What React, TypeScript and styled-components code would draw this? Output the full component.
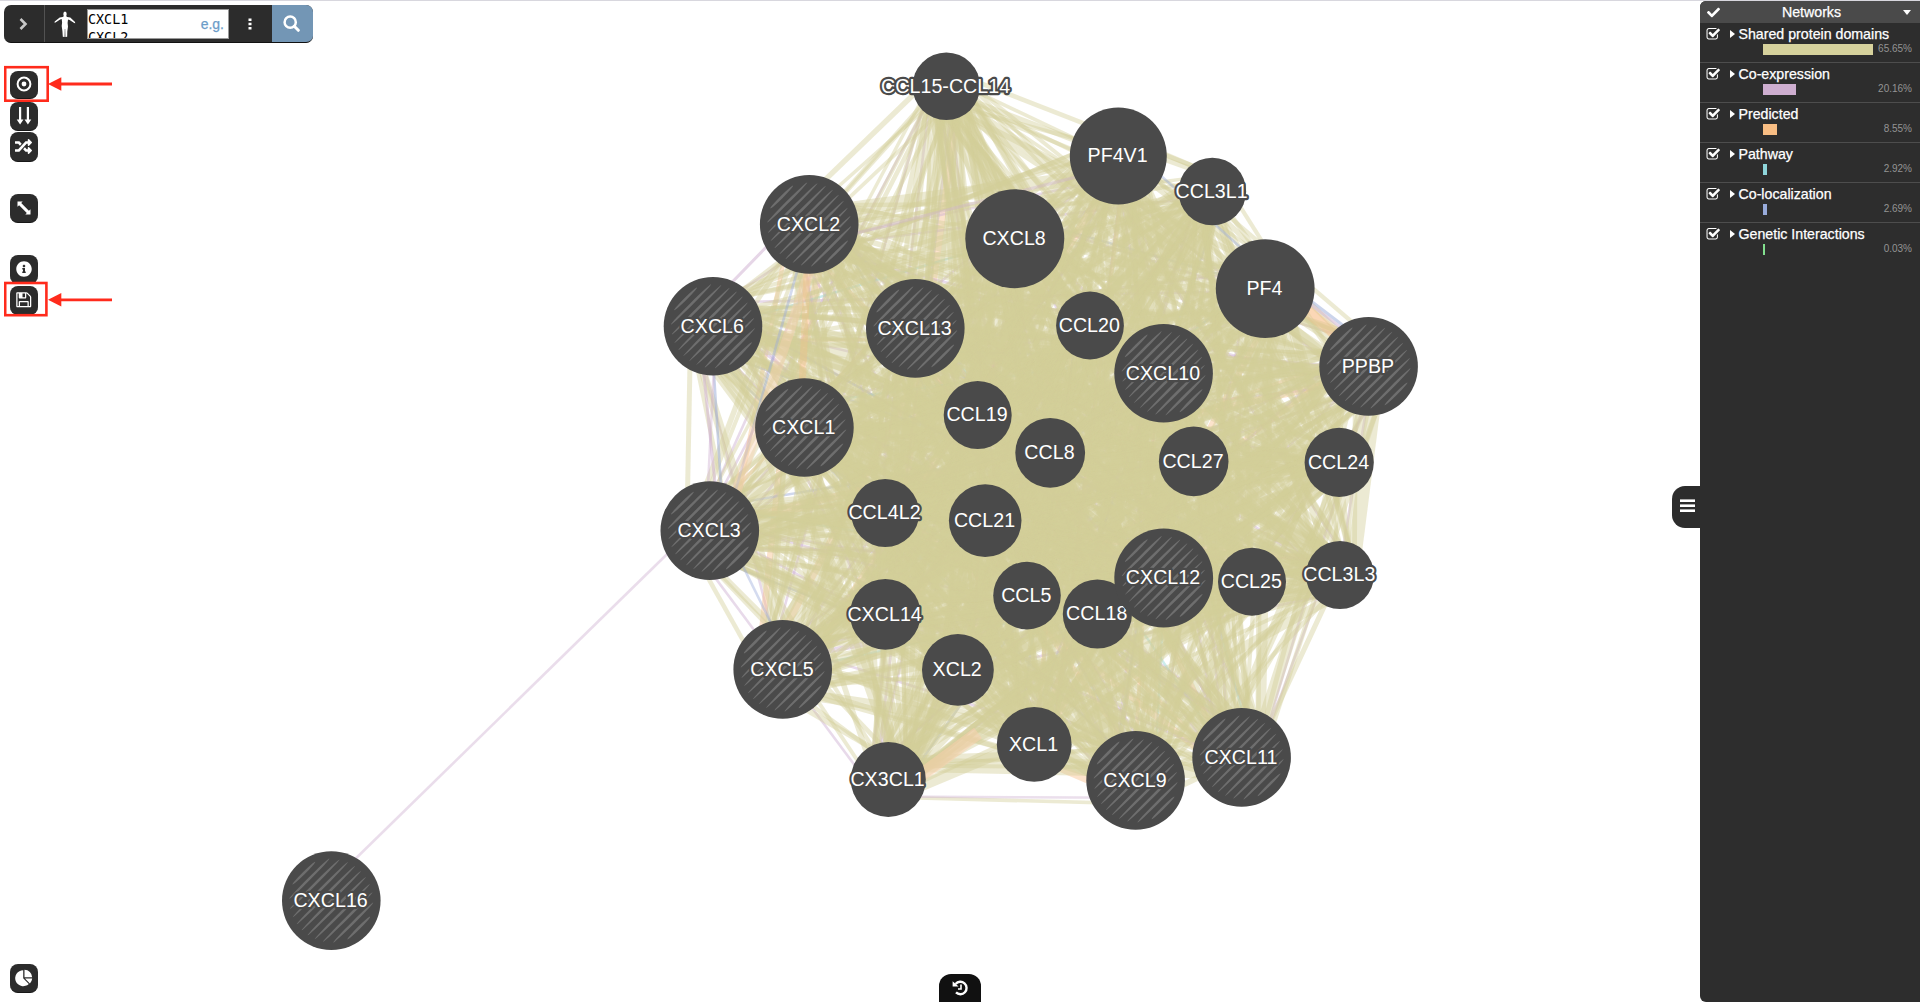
import React from "react";
import styled, { createGlobalStyle } from "styled-components";
import { FaCheck, FaInfoCircle, FaRandom } from "react-icons/fa";

const DARK = "#2c2c2c";
const NODE = "#4a4a4a";
const RED = "#ff2b1c";
const SANS = '"Liberation Sans", Arial, Helvetica, sans-serif';

const GlobalStyle = createGlobalStyle`
  html, body { margin: 0; padding: 0; }
  body { background: #fff; font-family: ${SANS}; overflow: hidden; }
  * { box-sizing: border-box; }
`;

const Page = styled.div`
  display: flex;
  width: 100%;
  height: 1002px;
  border-top: 1px solid #d8d7de;
`;

const Workspace = styled.main`
  position: relative;
  flex: 1;
  display: flex;
  flex-direction: column;
  align-items: flex-start;
  padding: 4px 0 0 4px;
`;

const Canvas = styled.svg`
  position: absolute;
  left: 0;
  top: -1px;
  width: 1700px;
  height: 1002px;
`;

const NodeLabel = styled.text`
  font-family: ${SANS};
  font-size: 19.6px;
  letter-spacing: 0.05px;
  fill: #fff;
  stroke: ${NODE};
  stroke-width: 4.4px;
  stroke-linejoin: round;
  paint-order: stroke;
  text-anchor: middle;
`;

const SearchBar = styled.div`
  position: relative;
  display: flex;
  width: 309px;
  height: 38px;
  border-radius: 7px;
  overflow: hidden;
  background: ${DARK};
  border-bottom: 1px solid #111;
`;

const BarCell = styled.div<{ $width: number; $fill?: string; $divider?: boolean }>`
  display: flex;
  align-items: center;
  justify-content: center;
  width: ${(p) => p.$width}px;
  padding-right: 2px;
  background: ${(p) => p.$fill ?? "transparent"};
  border-right: ${(p) => (p.$divider ? "1px solid #525252" : "none")};
`;

const GeneBox = styled.div`
  display: flex;
  justify-content: space-between;
  width: 142px;
  height: 30px;
  margin-top: 4px;
  padding: 0 4px 0 0;
  overflow: hidden;
  background: #fff;
  border: 1px solid #999;
`;

const GeneList = styled.div`
  padding-top: 1px;
  font: 13.4px/17.5px "DejaVu Sans Mono", monospace;
  color: #000;
  white-space: pre;
`;

const Example = styled.span`
  font-size: 14px;
  line-height: 29px;
  color: #6c9cc8;
  -webkit-text-stroke: 0.25px #6c9cc8;
`;

const Tools = styled.nav`
  display: flex;
  flex-direction: column;
  margin: 28px 0 0 6px;
`;

const ToolButton = styled.div<{ $gap?: number; $height?: number }>`
  position: relative;
  display: flex;
  align-items: center;
  justify-content: center;
  width: 28px;
  height: ${(p) => p.$height ?? 29}px;
  margin-top: ${(p) => p.$gap ?? 0}px;
  padding: 0 1px 1px 0;
  border-radius: 8px;
  background: ${DARK};
  border-bottom: 1px solid #171717;
  color: #fff;
`;

const Callout = styled.svg`
  position: absolute;
  left: -6px;
  width: 110px;
  height: 38px;
  top: -6px;
  z-index: 2;
`;

const PieTool = styled(ToolButton)`
  margin: auto 0 9px 6px;
`;

const HistoryTab = styled.div`
  position: absolute;
  left: 939px;
  bottom: 0;
  display: flex;
  align-items: center;
  justify-content: center;
  width: 42px;
  height: 28px;
  border-radius: 12px 12px 0 0;
  background: #111;
  color: #fff;
`;

const MenuTab = styled.div`
  position: absolute;
  right: 0;
  top: 485px;
  display: flex;
  flex-direction: column;
  justify-content: center;
  gap: 2px;
  width: 28px;
  height: 42px;
  padding: 0 5px 3px 8px;
  border-radius: 13px 0 0 13px;
  background: ${DARK};
`;

const MenuLine = styled.i`
  height: 3px;
  background: #fff;
  border-top: 1px solid #aaa;
`;

const Panel = styled.aside`
  width: 220px;
  border-radius: 6px 0 0 6px;
  overflow: hidden;
  background: #2d2d2d;
  color: #fff;
`;

const PanelHeader = styled.header`
  display: flex;
  align-items: center;
  justify-content: space-between;
  height: 22px;
  padding: 0 9px 0 7px;
  background: #4a4a4a;
  font-size: 14.2px;
  -webkit-text-stroke: 0.25px #fff;
`;

const Caret = styled.i`
  border: 4.5px solid transparent;
  border-top: 5px solid #fff;
  border-bottom: 0;
`;

const NetworkRow = styled.section`
  height: 40px;
  padding: 3px 8px 0 6px;
  border-bottom: 1px solid #4d4d4d;
  &:last-child { border-bottom: 0; }
`;

const RowTitle = styled.div`
  display: flex;
  align-items: center;
  height: 16px;
  font-size: 14.2px;
  white-space: nowrap;
  -webkit-text-stroke: 0.25px #fff;
`;

const Expander = styled.i`
  margin: 0 4px 0 9px;
  border: 4.5px solid transparent;
  border-left: 5px solid #fff;
  border-right: 0;
`;

const WeightLine = styled.div`
  display: flex;
  justify-content: space-between;
  height: 16px;
  padding-left: 57px;
  font-size: 10px;
  line-height: 14px;
  color: #949494;
`;

const WeightBar = styled.div<{ $width: number; $color: string }>`
  width: ${(p) => p.$width}px;
  height: 11px;
  margin-top: 2px;
  background: ${(p) => p.$color};
`;

type GeneNode = { name: string; x: number; y: number; r: number; query?: boolean };

const nodes: GeneNode[] = [
  { name: "CCL15-CCL14", x: 946.3, y: 86.3, r: 33.8 },
  { name: "CXCL2", x: 809.2, y: 224.4, r: 49.3, query: true },
  { name: "CXCL6", x: 713, y: 326.3, r: 49.3, query: true },
  { name: "CXCL13", x: 915.3, y: 328.4, r: 49.3, query: true },
  { name: "CXCL8", x: 1014.8, y: 238.7, r: 49.5 },
  { name: "CXCL1", x: 804.4, y: 427.5, r: 49.3, query: true },
  { name: "CCL19", x: 977.7, y: 415, r: 34 },
  { name: "PF4V1", x: 1118.3, y: 156, r: 48.5 },
  { name: "CCL3L1", x: 1212.3, y: 191.5, r: 33.8 },
  { name: "PF4", x: 1265.2, y: 288.6, r: 49.4 },
  { name: "CCL20", x: 1090, y: 325.5, r: 33.9 },
  { name: "CXCL10", x: 1163.6, y: 373.3, r: 49.3, query: true },
  { name: "PPBP", x: 1368.6, y: 366.4, r: 49.3, query: true },
  { name: "CCL8", x: 1050.2, y: 452.8, r: 34.9 },
  { name: "CCL27", x: 1193.7, y: 461.4, r: 34.8 },
  { name: "CCL24", x: 1339.2, y: 462.4, r: 34.6 },
  { name: "CXCL3", x: 709.8, y: 530.6, r: 49.3, query: true },
  { name: "CCL4L2", x: 885.2, y: 513, r: 34 },
  { name: "CCL21", x: 985.2, y: 520.6, r: 36.3 },
  { name: "CCL5", x: 1027, y: 595.6, r: 33.8 },
  { name: "CXCL14", x: 885.3, y: 614.3, r: 35.4 },
  { name: "CXCL5", x: 782.7, y: 669.4, r: 49.3, query: true },
  { name: "XCL2", x: 957.9, y: 669.9, r: 35.9 },
  { name: "CX3CL1", x: 888.3, y: 779.4, r: 37.5 },
  { name: "XCL1", x: 1034.2, y: 744.4, r: 37.4 },
  { name: "CCL18", x: 1097.4, y: 614, r: 34.6 },
  { name: "CXCL12", x: 1163.7, y: 578, r: 49.4, query: true },
  { name: "CCL25", x: 1252, y: 581.7, r: 34 },
  { name: "CCL3L3", x: 1340, y: 575, r: 34 },
  { name: "CXCL9", x: 1135.6, y: 780.4, r: 49.3, query: true },
  { name: "CXCL11", x: 1241.6, y: 757.4, r: 49.3, query: true },
  { name: "CXCL16", x: 331.3, y: 900.6, r: 49.3, query: true },
];

const COLORS = {
  domain: "#d3ce98",
  coexp: "#cdaed0",
  predicted: "#f8bd85",
  pathway: "#8ed4d8",
  coloc: "#98a9d8",
  genetic: "#83dd8d",
};

type Edge = { d: string; width: number; color: string; opacity: number };

function seeded(seed: number) {
  let s = seed;
  return () => {
    s = (s + 0x6d2b79f5) | 0;
    let t = Math.imul(s ^ (s >>> 15), 1 | s);
    t = (t + Math.imul(t ^ (t >>> 7), 61 | t)) ^ t;
    return ((t ^ (t >>> 14)) >>> 0) / 4294967296;
  };
}

// Straight segment between centres, shifted sideways at each end.
function shifted(a: GeneNode, b: GeneNode, sa: number, sb: number) {
  const dx = b.x - a.x;
  const dy = b.y - a.y;
  const len = Math.hypot(dx, dy);
  const nx = -dy / len;
  const ny = dx / len;
  return `M${a.x + nx * sa} ${a.y + ny * sa}L${b.x + nx * sb} ${b.y + ny * sb}`;
}

// Haystack edge: every end sits at a random angle on an inner ring of its node.
function haystack(a: GeneNode, b: GeneNode, rnd: () => number) {
  const t = rnd() * Math.PI * 2;
  const u = rnd() * Math.PI * 2;
  const ra = a.r * 0.5;
  const rb = b.r * 0.5;
  const p = [a.x + Math.cos(t) * ra, a.y + Math.sin(t) * ra, b.x + Math.cos(u) * rb, b.y + Math.sin(u) * rb];
  const [x1, y1, x2, y2] = p.map((v) => v.toFixed(1));
  return `M${x1} ${y1}L${x2} ${y2}`;
}

const find = (name: string) => nodes.find((n) => n.name === name)!;
const link = (a: string, b: string, sa: number, sb: number, color: string, width = 2.5, opacity = 0.42): Edge => ({
  d: shifted(find(a), find(b), sa, sb), width, color, opacity,
});

function buildEdges() {
  const rnd = seeded(41);
  const family = nodes.filter((n) => n.name !== "CXCL16");
  const tinted: Edge[] = [];
  const domain: Edge[] = [];
  for (let i = 0; i < family.length; i++) {
    for (let j = i + 1; j < family.length; j++) {
      const a = family[i];
      const b = family[j];
      const cxcl = a.r > 48 && b.r > 48;
      const count = rnd() < 0.45 ? 2 : 3;
      for (let k = 0; k < count; k++) {
        const wide = rnd() < 0.13;
        domain.push({ d: haystack(a, b, rnd), width: wide ? 9 + rnd() * 6 : 3.4 + rnd() * 2.4, color: COLORS.domain, opacity: 0.43 });
      }
      const west = a.x < 950 && b.x < 950;
      if (rnd() < (cxcl ? 0.6 : 0.18)) {
        tinted.push({ d: haystack(a, b, rnd), width: 2.6, color: COLORS.coexp, opacity: 0.45 });
      }
      if (rnd() < (cxcl ? (west ? 0.5 : 0.2) : 0.04)) {
        tinted.push({ d: haystack(a, b, rnd), width: 3 + rnd() * 6, color: COLORS.predicted, opacity: 0.42 });
      }
      if (rnd() < (cxcl ? 0.2 : 0.03)) {
        tinted.push({ d: haystack(a, b, rnd), width: 2.4, color: rnd() < 0.7 ? COLORS.coloc : COLORS.pathway, opacity: 0.45 });
      }
    }
  }
  return [...tinted, ...domain];
}

const edges: Edge[] = [
  ...buildEdges(),
  link("CXCL3", "CXCL16", 13, 13, COLORS.coexp, 2.6, 0.42),
  { d: "M888 796.5L1140 797.8", width: 2.5, color: COLORS.coexp, opacity: 0.4 },
  { d: "M905 787L978 733", width: 13, color: "#fbcfae", opacity: 0.5 },
  link("CXCL2", "CXCL6", 15, 17, COLORS.coexp, 3, 0.5),
  link("CXCL2", "CXCL3", -1, -14, COLORS.coloc, 2.6),
  link("CXCL2", "CXCL3", -15, -13, "#fbcfae", 10, 0.4),
  link("CXCL2", "CXCL1", 0, 4, COLORS.predicted, 7, 0.3),
  link("CXCL6", "CXCL3", 14, -10, COLORS.coexp, 3, 0.5),
  link("CXCL6", "CXCL3", 2, -14, COLORS.coloc, 2.6, 0.5),
  link("CXCL6", "CXCL3", -3, 4, COLORS.coexp, 2.6),
  link("CXCL3", "CXCL5", -14, -10, COLORS.coloc, 2.6),
  link("CXCL2", "PF4V1", 20, 10, COLORS.coexp, 3, 0.35),
  link("PF4", "PPBP", -18, -17, COLORS.coloc, 3, 0.5),
  link("PF4", "PPBP", -15, -14, COLORS.coexp, 3, 0.5),
  link("PF4", "PPBP", -8, -5, COLORS.predicted, 12, 0.3),
  link("PF4V1", "PF4", -14, -14, COLORS.coloc, 2.6),
];

const stripes = Array.from({ length: 11 }, (_, i) => {
  const offset = -38.8 + i * 7.76;
  return { offset, half: Math.sqrt(42 * 42 - offset * offset) };
});

function Gene({ node }: { node: GeneNode }) {
  return (
    <g transform={`translate(${node.x} ${node.y})`}>
      <circle r={node.r} fill={NODE} />
      {node.query && (
        <g transform="rotate(-45)" fill="#6e6e6e">
          {stripes.map((s) => (
            <ellipse key={s.offset} cy={s.offset} rx={s.half} ry={1.3} />
          ))}
        </g>
      )}
      <NodeLabel x={-0.7} y={6.4}>{node.name}</NodeLabel>
    </g>
  );
}

function Graph() {
  return (
    <Canvas viewBox="0 0 1700 1002">
      <g fill="none">
        {edges.map((e, i) => (
          <path key={i} d={e.d} stroke={e.color} strokeWidth={e.width} strokeOpacity={e.opacity} />
        ))}
      </g>
      {nodes.map((n) => <Gene key={n.name} node={n} />)}
    </Canvas>
  );
}

const Person = () => (
  <svg width="22" height="26" viewBox="0 0 22 26" fill="#fff">
    <ellipse cx="11" cy="3" rx="1.7" ry="2.5" />
    <path d="M10 5h2l1.3 1 3 .5 4.700 4.500.2 1.300-1-.3-4.600-3-1.600-.5-.4 3.500.4 3.500-.7 5-.1 5.300-1.800.2-.2-8h-.4l-.2 8-1.800-.2L8.400 20l-.7-5 .4-3.500-.4-3.500-1.600.5-4.600 3-1 .3.200-1.300L5.700 6.500l3-.5z" />
  </svg>
);

const CheckSquare = () => (
  <svg width="14.500" height="14.500" viewBox="0 0 1792 1792" fill="#fff">
    <path d="M1472 930v318q0 119-84.500 203.500t-203.500 84.500h-832q-119 0-203.500-84.500t-84.500-203.500v-832q0-119 84.500-203.500t203.500-84.500h832q63 0 117 25 15 7 18 23 3 17-9 29l-49 49q-10 10-23 10-3 0-9-2-23-6-45-6h-832q-66 0-113 47t-47 113v832q0 66 47 113t113 47h832q66 0 113-47t47-113v-254q0-13 9-22l64-64q10-10 23-10 6 0 12 3 20 8 20 29zm231-489l-814 814q-24 24-57 24t-57-24l-430-430q-24-24-24-57t24-57l110-110q24-24 57-24t57 24l263 263 647-647q24-24 57-24t57 24l110 110q24 24 24 57t-24 57z" />
  </svg>
);

const Floppy = () => (
  <svg width="17.500" height="17.500" viewBox="0 0 1792 1792" fill="#fff">
    <path d="M512 1536h768v-384h-768v384zm896 0h128v-896q0-14-10-38.500t-20-34.500l-281-281q-10-10-34-20t-39-10v416q0 40-28 68t-68 28h-576q-40 0-68-28t-28-68v-416h-128v1280h128v-416q0-40 28-68t68-28h832q40 0 68 28t28 68v416zm-384-928v-320q0-13-9.500-22.500t-22.500-9.500h-192q-13 0-22.500 9.500t-9.500 22.500v320q0 13 9.500 22.500t22.500 9.500h192q13 0 22.500-9.500t9.500-22.500zm640 32v928q0 40-28 68t-68 28h-1344q-40 0-68-28t-28-68v-1344q0-40 28-68t68-28h928q40 0 88 20t76 48l280 280q28 28 48 76t20 88z" />
  </svg>
);

const Target = () => (
  <svg width="16" height="16" viewBox="0 0 16 16">
    <circle cx="8" cy="8" r="6.400" fill="none" stroke="#fff" strokeWidth="2" />
    <circle cx="8" cy="8" r="2.400" fill="#fff" />
  </svg>
);

const DownArrows = () => (
  <svg width="16" height="18" viewBox="0 0 16 18" fill="#fff">
    <path d="M3 0h2.200v12.500H7.500L4.100 17.500.7 12.500H3zM10.800 0H13v12.500h2.300l-3.400 5-3.400-5h2.300z" />
  </svg>
);

const Diagonal = () => (
  <svg width="14" height="14" viewBox="0 0 14 14" fill="#fff">
    <path d="M.5.500h5.200L4.200 2.100l7.700 7.600 1.600-1.500v5.300H8.300l1.500-1.600-7.700-7.700L.5 5.800z" />
  </svg>
);

const Pie = () => (
  <svg width="18" height="18" viewBox="0 0 18 18" fill="#fff">
    <path d="M8.200 1.200A8 8 0 1 0 13.800 14.900L8.200 9.300z" />
    <path d="M9.500.8A7.800 7.800 0 0 1 17.200 8.300H9.500zM10 9.500h7.200a8 8 0 0 1-2.300 4.900z" />
  </svg>
);

const History = () => (
  <svg width="17" height="16" viewBox="0 0 17 16" fill="none" stroke="#fff">
    <path d="M3.600 4A6.200 6.200 0 1 1 4 12.400" strokeWidth="2.400" />
    <path d="M.6 1.200L6.600 6.600H.6z" fill="#fff" stroke="none" />
    <path d="M9 4.600V9H6" strokeWidth="1.600" />
  </svg>
);

const Pointer = ({ width, height, drop = 0 }: { width: number; height: number; drop?: number }) => (
  <Callout viewBox={`4 ${65 - drop} 110 38`}>
    <rect x="5.200" y="67.200" width={width} height={height} fill="none" stroke={RED} strokeWidth="2.600" />
    <path d="M60 84H112" stroke={RED} strokeWidth="2.800" />
    <path d="M48 84L61.300 77.200V90.800z" fill={RED} />
  </Callout>
);

const networks = [
  { name: "Shared protein domains", percent: "65.65%", width: 110, color: "#d6d19c" },
  { name: "Co-expression", percent: "20.16%", width: 33, color: "#ceaed0" },
  { name: "Predicted", percent: "8.55%", width: 14, color: "#f8bd83" },
  { name: "Pathway", percent: "2.92%", width: 4, color: "#8ed5da" },
  { name: "Co-localization", percent: "2.69%", width: 4, color: "#98abdb" },
  { name: "Genetic Interactions", percent: "0.03%", width: 2, color: "#82df8e" },
];

export default function App() {
  return (
    <Page>
      <GlobalStyle />
      <Workspace>
        <Graph />
        <SearchBar>
          <BarCell $width={41} $divider>
            <svg width="9" height="12" viewBox="0 0 9 12">
              <path d="M1.500 1L6.500 6L1.500 11" fill="none" stroke="#c8c8c8" strokeWidth="2.600" />
            </svg>
          </BarCell>
          <BarCell $width={42}><Person /></BarCell>
          <GeneBox>
            <GeneList>{"CXCL1\nCXCL2"}</GeneList>
            <Example>e.g.</Example>
          </GeneBox>
          <BarCell $width={43}>
            <svg width="4" height="12" viewBox="0 0 4 12" fill="#fff">
              <path d="M.5.500h3v2.600h-3zM.5 4.700h3v2.600h-3zM.5 8.900h3v2.600h-3z" />
            </svg>
          </BarCell>
          <BarCell $width={41} $fill="#7396b5">
            <svg width="17" height="17" viewBox="0 0 17 17" fill="none" stroke="#fff">
              <circle cx="7.200" cy="7.200" r="5.600" strokeWidth="2.500" />
              <path d="M11.300 11.300L15.300 15.300" strokeWidth="3" strokeLinecap="round" />
            </svg>
          </BarCell>
        </SearchBar>
        <Tools>
          <ToolButton $height={28}>
            <Target />
            <Pointer width={42.5} height={33.5} />
          </ToolButton>
          <ToolButton $gap={3}><DownArrows /></ToolButton>
          <ToolButton $gap={1} $height={30}><FaRandom size={17} /></ToolButton>
          <ToolButton $gap={32}><Diagonal /></ToolButton>
          <ToolButton $gap={32}><FaInfoCircle size={16} /></ToolButton>
          <ToolButton $gap={2}>
            <Floppy />
            <Pointer width={41.2} height={32.2} drop={0.8} />
          </ToolButton>
        </Tools>
        <PieTool><Pie /></PieTool>
        <HistoryTab><History /></HistoryTab>
        <MenuTab><MenuLine /><MenuLine /><MenuLine /></MenuTab>
      </Workspace>
      <Panel>
        <PanelHeader>
          <FaCheck size={13} />
          <span>Networks</span>
          <Caret />
        </PanelHeader>
        {networks.map((n) => (
          <NetworkRow key={n.name}>
            <RowTitle><CheckSquare /><Expander />{n.name}</RowTitle>
            <WeightLine>
              <WeightBar $width={n.width} $color={n.color} />
              <span>{n.percent}</span>
            </WeightLine>
          </NetworkRow>
        ))}
      </Panel>
    </Page>
  );
}
